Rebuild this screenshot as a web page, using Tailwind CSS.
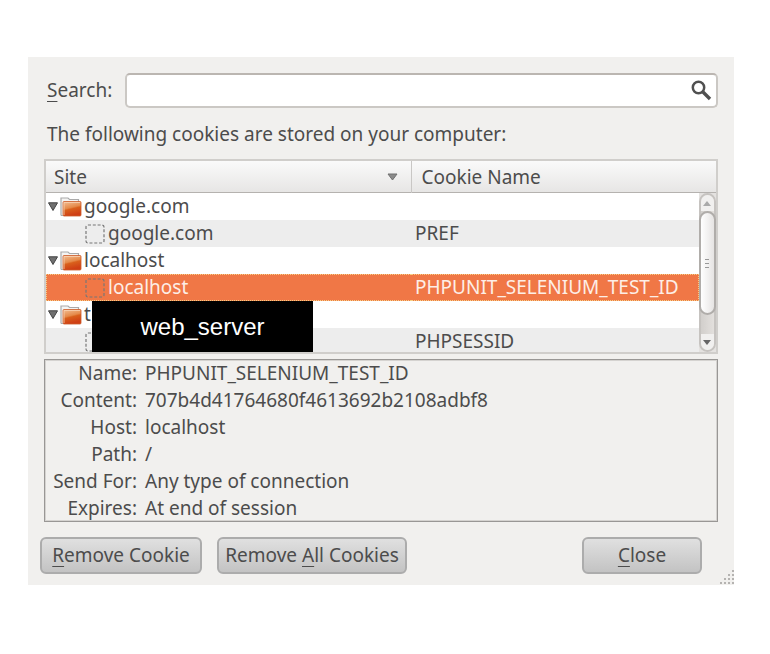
<!DOCTYPE html>
<html lang="en">
<head>
    <meta charset="UTF-8">
    <meta name="viewport" content="width=device-width, initial-scale=1.0">
    <title>Cookies</title>
    <script src="https://cdn.jsdelivr.net/npm/@tailwindcss/browser@4"></script>
</head>
<body class="bg-white pt-[57px] pl-7 pr-9 pb-12 font-['Noto_Sans',sans-serif] text-[19px] leading-[27px] text-[#4c4c4c]">
    <!-- Shared icons -->
    <svg class="absolute size-0" aria-hidden="true">
        <defs>
            <linearGradient id="folderFill" x1="0" y1="0" x2="0.3" y2="1">
                <stop offset="0" stop-color="#f3c096"/>
                <stop offset="0.5" stop-color="#e58a4a"/>
                <stop offset="0.6" stop-color="#d9601c"/>
                <stop offset="1" stop-color="#cf3f15"/>
            </linearGradient>
        </defs>
        <symbol id="folder" viewBox="0 0 22 20">
            <path d="M1 18.500V1H8l1.500 1.500H18.500V6" fill="#f4f4f3" stroke="#aaa" stroke-width="1.200"/>
            <rect x="3" y="4.500" width="18" height="14.500" rx="1" fill="url(#folderFill)" stroke="#cc5a28" stroke-width="0.800"/>
            <path d="M4 18V5.500h16" fill="none" stroke="#f7d3b5" stroke-width="0.800"/>
            <path d="M1 18.500h2" stroke="#aaa"/>
        </symbol>
        <symbol id="expander" viewBox="0 0 10 9">
            <path d="M0.500 0.800h9L5 8.500z" fill="#707070" stroke="#444" stroke-width="1"/>
        </symbol>
        <symbol id="blank" viewBox="0 0 20 20">
            <rect x="1" y="1" width="18" height="18" rx="2" fill="none" stroke="#777" stroke-width="1.200" stroke-dasharray="3 1.800"/>
        </symbol>
    </svg>

    <main class="relative bg-[#f1f0ee] pt-4 pb-[11px] pl-3 pr-4">
        <div class="pl-1">
            <div class="flex items-center pl-[3px]">
                <label for="search" class="mr-[13px]"><span class="underline underline-offset-4">S</span>earch:</label>
                <div class="relative flex-1">
                    <input id="search" type="text" class="block h-[35px] w-full rounded-[5px] border-2 border-[#cbc8c4] border-t-[#bbb6b1] bg-white px-2 pr-9 outline-none">
                    <svg class="absolute top-[7px] right-[6px] size-[21px]" viewBox="0 0 21 21" fill="none" stroke="#505050">
                        <circle cx="7.500" cy="7.500" r="5.700" stroke-width="2.500"/>
                        <path d="M12 12l7 7" stroke-width="3.400"/>
                    </svg>
                </div>
            </div>

            <p class="mt-[13px] pl-[3px]">The following cookies are stored on your computer:</p>

            <!-- Cookie list -->
            <div class="relative mt-[11px] h-[195px] overflow-hidden border-2 border-[#d0cecb]">
                <table class="w-full table-fixed border-collapse text-left">
                    <colgroup>
                        <col class="w-[365px]">
                        <col>
                        <col class="w-[17px]">
                    </colgroup>
                    <thead>
                        <tr class="h-8 bg-linear-to-b from-[#fafafa] to-[#e6e5e4] shadow-[inset_0_-1px_0_#b5b2af]">
                            <th class="border-r border-[#c9c7c5] p-0 pl-2 font-normal">
                                <div class="flex items-center justify-between pr-[13px]">
                                    Site
                                    <svg class="h-2 w-[11px]" viewBox="0 0 11 8"><path d="M1 1h9L5.500 7z" fill="#8b8b8b" stroke="#707070"/></svg>
                                </div>
                            </th>
                            <th colspan="2" class="p-0 pl-[10px] font-normal">Cookie Name</th>
                        </tr>
                    </thead>
                    <tbody class="bg-white">
                        <tr class="h-[27px]">
                            <td class="p-0">
                                <div class="flex h-[27px] items-center pl-0.5">
                                    <svg class="mr-0.5 h-[9px] w-[10px]"><use href="#expander"/></svg>
                                    <svg class="mr-0.5 h-5 w-[22px]"><use href="#folder"/></svg>
                                    google.com
                                </div>
                            </td>
                            <td class="p-0"></td>
                            <td rowspan="6" class="bg-[#e4e2e0] p-0 align-top">
                                <div class="flex h-[159px] flex-col rounded-full border-2 border-[#c6c3c0] bg-linear-to-r from-[#d2cfcc] to-[#e3e0dd]">
                                    <div class="flex h-4 shrink-0 items-center justify-center rounded-t-full bg-[#f1f0ef]">
                                        <svg class="h-[5px] w-2" viewBox="0 0 8 5"><path d="M0 5h8L4 0z" fill="#aaa"/></svg>
                                    </div>
                                    <div class="-mx-0.5 flex h-[104px] shrink-0 flex-col items-center justify-center gap-[3px] rounded-full border-2 border-[#b0adaa] bg-linear-to-r from-white to-[#e6e4e3]">
                                        <i class="h-px w-1 bg-[#999]"></i>
                                        <i class="h-px w-1 bg-[#999]"></i>
                                        <i class="h-px w-1 bg-[#999]"></i>
                                    </div>
                                    <div class="flex-1"></div>
                                    <div class="flex h-4 shrink-0 items-center justify-center rounded-b-full bg-[#f1f0ef]">
                                        <svg class="h-[5px] w-2" viewBox="0 0 8 5"><path d="M0 0h8L4 5z" fill="#666"/></svg>
                                    </div>
                                </div>
                            </td>
                        </tr>
                        <tr class="h-[27px] bg-[#ededed]">
                            <td class="p-0">
                                <div class="flex h-[27px] items-center pl-[39px]">
                                    <svg class="mr-[3px] size-5"><use href="#blank"/></svg>
                                    google.com
                                </div>
                            </td>
                            <td class="p-0 pl-1">PREF</td>
                        </tr>
                        <tr class="h-[27px]">
                            <td class="p-0">
                                <div class="flex h-[27px] items-center pl-0.5">
                                    <svg class="mr-0.5 h-[9px] w-[10px]"><use href="#expander"/></svg>
                                    <svg class="mr-0.5 h-5 w-[22px]"><use href="#folder"/></svg>
                                    localhost
                                </div>
                            </td>
                            <td class="p-0"></td>
                        </tr>
                        <tr class="h-[27px] bg-[#f07746] text-[#fdeee6]">
                            <td class="p-0">
                                <div class="flex h-[27px] items-center border-y border-l border-dotted border-[#f6cf83] pl-[38px]">
                                    <svg class="mr-[3px] size-5"><use href="#blank"/></svg>
                                    localhost
                                </div>
                            </td>
                            <td class="p-0">
                                <div class="h-[27px] border-y border-r border-dotted border-[#f6cf83] pl-1 leading-[25px]">PHPUNIT_SELENIUM_TEST_ID</div>
                            </td>
                        </tr>
                        <tr class="h-[27px]">
                            <td class="p-0">
                                <div class="flex h-[27px] items-center pl-0.5">
                                    <svg class="mr-0.5 h-[9px] w-[10px]"><use href="#expander"/></svg>
                                    <svg class="mr-0.5 h-5 w-[22px]"><use href="#folder"/></svg>
                                    t
                                </div>
                            </td>
                            <td class="p-0"></td>
                        </tr>
                        <tr class="h-[27px] bg-[#ededed]">
                            <td class="p-0">
                                <div class="flex h-[27px] items-center pl-[39px]">
                                    <svg class="mr-[3px] size-5"><use href="#blank"/></svg>
                                </div>
                            </td>
                            <td class="p-0 pl-1">PHPSESSID</td>
                        </tr>
                    </tbody>
                </table>
                <!-- Host name label laid over the last group -->
                <div class="absolute bottom-0 left-[46px] flex h-[51px] w-[221px] items-center justify-center bg-black font-['Liberation_Sans',sans-serif] text-2xl text-white">web_server</div>
            </div>

            <!-- Selected cookie -->
            <dl class="mt-[5px] grid h-[163px] grid-cols-[91px_1fr] gap-x-2 border border-[#999795] pl-px leading-[27px] shadow-[inset_0_0_0_1px_#d5d3d0]">
                <dt class="text-right">Name:</dt><dd>PHPUNIT_SELENIUM_TEST_ID</dd>
                <dt class="text-right">Content:</dt><dd>707b4d41764680f4613692b2108adbf8</dd>
                <dt class="text-right">Host:</dt><dd>localhost</dd>
                <dt class="text-right">Path:</dt><dd>/</dd>
                <dt class="text-right">Send For:</dt><dd>Any type of connection</dd>
                <dt class="text-right">Expires:</dt><dd>At end of session</dd>
            </dl>
        </div>

        <div class="mt-[15px] flex gap-[15px] pr-4">
            <button type="button" class="h-[37px] w-[162px] rounded-md border-2 border-[#acacac] bg-linear-to-b from-[#e0e0e0] to-[#c3c3c3] whitespace-nowrap"><span class="underline underline-offset-4">R</span>emove Cookie</button>
            <button type="button" class="h-[37px] w-[190px] rounded-md border-2 border-[#acacac] bg-linear-to-b from-[#e0e0e0] to-[#c3c3c3] whitespace-nowrap">Remove <span class="underline underline-offset-4">A</span>ll Cookies</button>
            <button type="button" class="ml-auto h-[37px] w-[120px] rounded-md border-2 border-[#acacac] bg-linear-to-b from-[#e0e0e0] to-[#c3c3c3]"><span class="underline underline-offset-4">C</span>lose</button>
        </div>

        <!-- Resize grip -->
        <svg class="absolute right-0 bottom-0 size-[15px]" viewBox="0 0 15 15" stroke="#b5b3b1" stroke-width="2" stroke-dasharray="2 2">
            <path d="M1 13h14M5 9h10M9 5h6M13 1h2"/>
        </svg>
    </main>
</body>
</html>
